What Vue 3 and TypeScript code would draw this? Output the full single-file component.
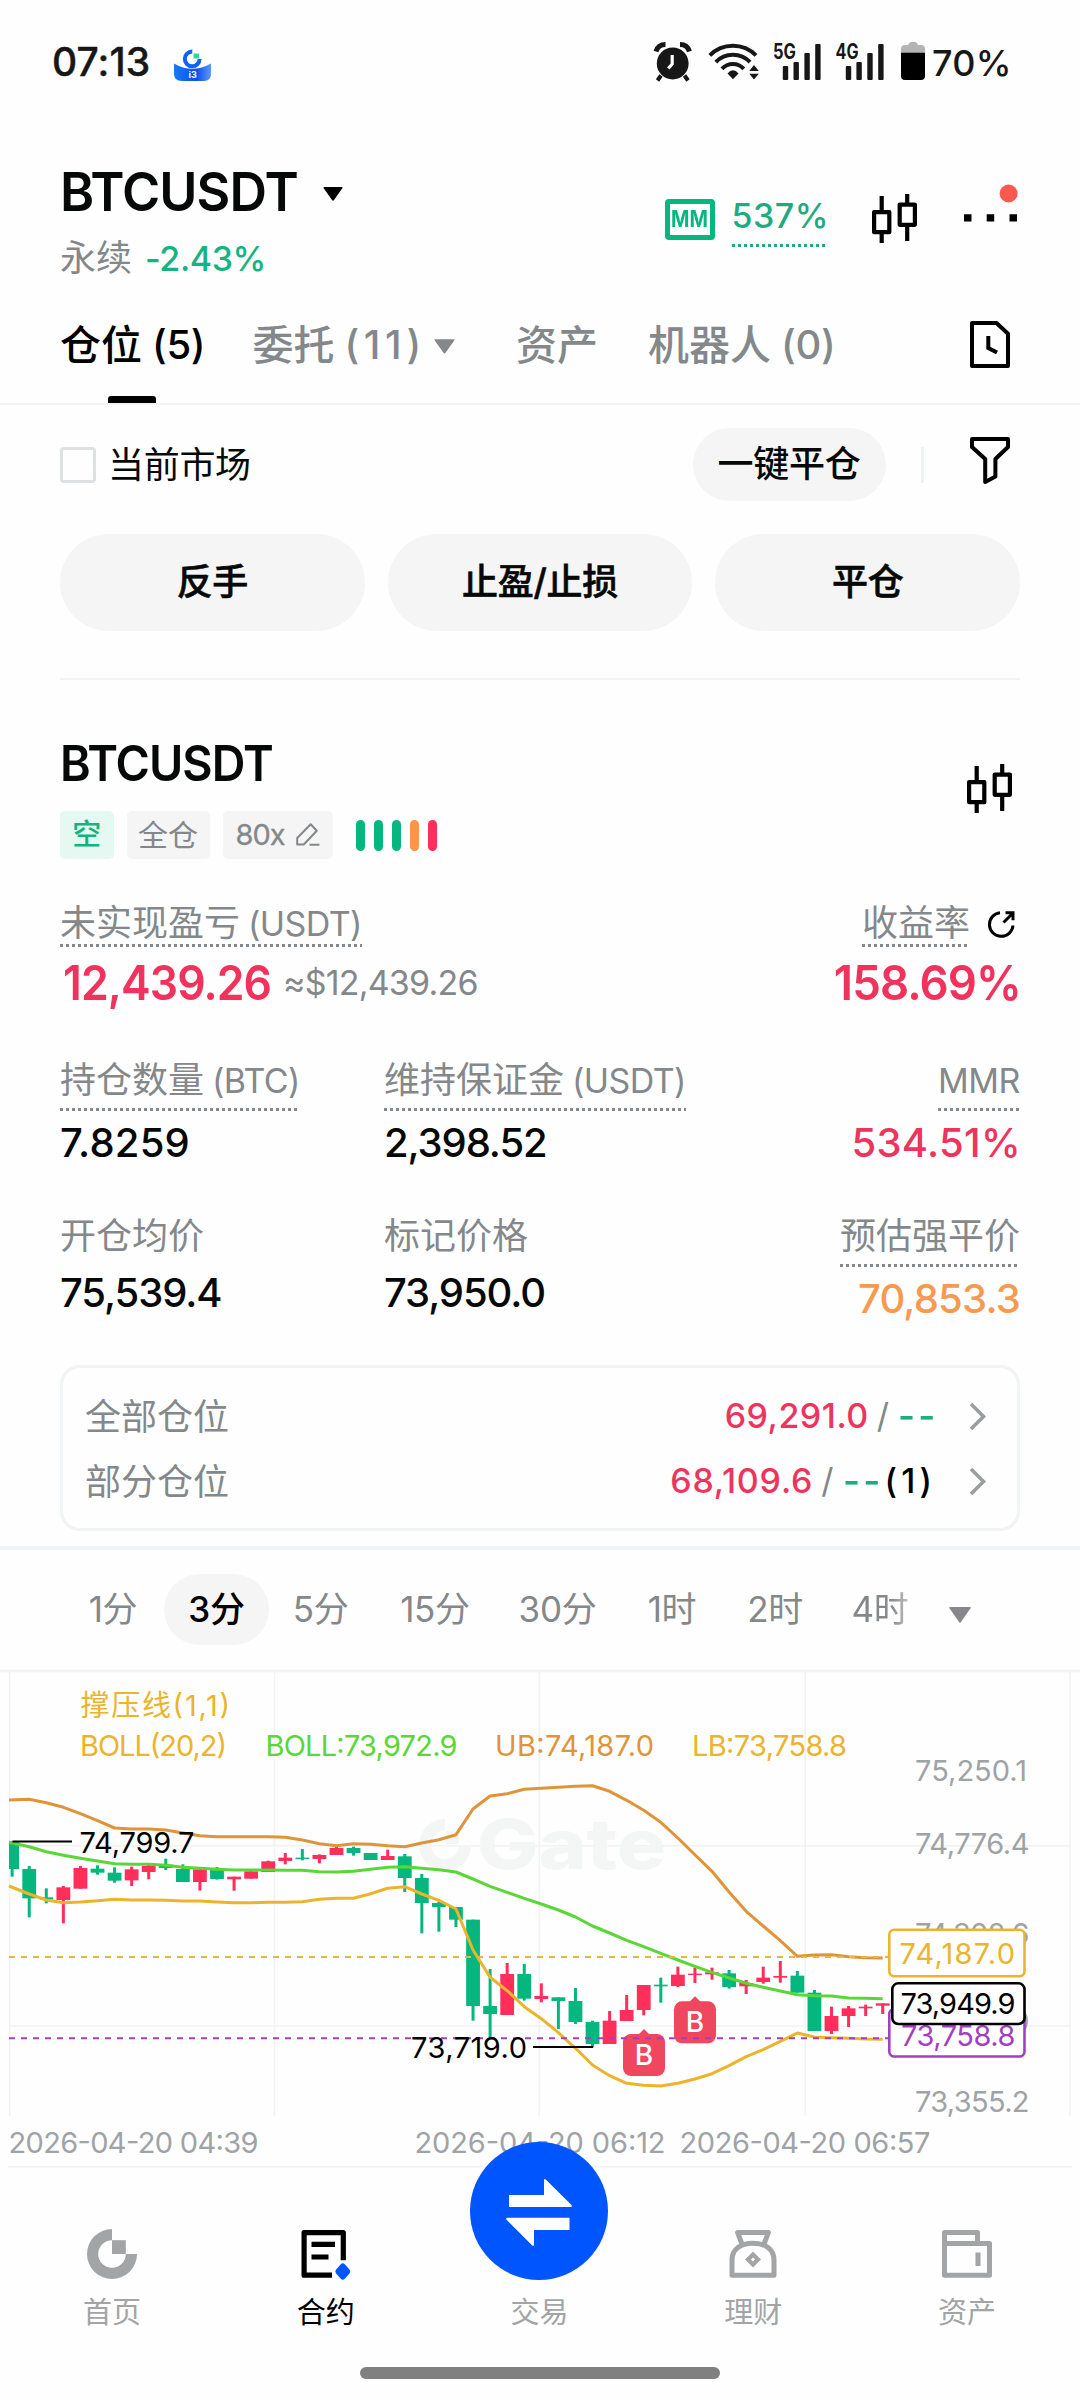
<script setup lang="ts">
interface Frame { label: string; width: number; active?: boolean; fade?: boolean }
type Candle = [up: 0 | 1, high: number, top: number, bottom: number, low: number]

const frames: Frame[] = [
  { label: '1分', width: 102 },
  { label: '3分', width: 105, active: true },
  { label: '5分', width: 103 },
  { label: '15分', width: 126 },
  { label: '30分', width: 119 },
  { label: '1时', width: 110 },
  { label: '2时', width: 96 },
  { label: '4时', width: 114, fade: true },
]

const risk = ['#05b77e', '#05b77e', '#05b77e', '#ff9548', '#ff2e5b']

// Heights are in thirds of a pixel, measured down from the top of the chart.
const candles: Candle[] = [
  [0, 514, 514, 597, 620], [0, 588, 597, 685, 742], [0, 655, 682, 688, 700], [1, 648, 652, 690, 760],
  [1, 588, 594, 656, 656], [0, 586, 596, 608, 614], [0, 592, 608, 632, 638], [1, 590, 598, 631, 648],
  [1, 582, 588, 606, 628], [0, 566, 584, 594, 600], [0, 583, 597, 636, 636], [1, 598, 598, 636, 662],
  [0, 591, 600, 627, 629], [1, 620, 620, 628, 662], [1, 604, 604, 626, 626], [1, 572, 574, 606, 606],
  [1, 549, 563, 573, 583], [0, 537, 563, 567, 571], [1, 553, 555, 567, 580], [1, 530, 534, 555, 555],
  [0, 530, 534, 549, 557], [0, 549, 549, 570, 570], [1, 539, 558, 570, 570], [0, 552, 559, 624, 666],
  [0, 612, 624, 699, 790], [0, 695, 699, 711, 785], [0, 711, 711, 749, 771], [0, 749, 749, 1008, 1052],
  [0, 897, 1008, 1032, 1104], [1, 879, 912, 1035, 1035], [0, 882, 912, 986, 992], [1, 940, 978, 987, 997],
  [0, 982, 982, 993, 1077], [0, 954, 993, 1056, 1062], [0, 1052, 1056, 1122, 1132], [1, 1023, 1052, 1122, 1122],
  [1, 975, 1020, 1053, 1053], [1, 945, 945, 1020, 1036], [0, 923, 944, 949, 998], [1, 890, 914, 948, 951],
  [1, 893, 911, 915, 939], [1, 893, 907, 913, 929], [0, 900, 910, 951, 956], [1, 930, 939, 949, 972],
  [1, 890, 923, 936, 941], [1, 873, 918, 923, 938], [0, 903, 917, 968, 968], [0, 960, 968, 1083, 1083],
  [1, 1010, 1038, 1083, 1092], [1, 1008, 1015, 1038, 1071], [1, 1004, 1010, 1015, 1038], [1, 1000, 1000, 1007, 1032],
]
const upper = [390, 388, 398, 412, 431, 452, 474, 477, 477, 480, 489, 497, 500, 500, 500, 500, 502, 510, 521, 527, 521, 523, 527, 530, 519, 509, 494, 417, 378, 371, 358, 355, 352, 349, 347, 364, 391, 421, 457, 504, 554, 604, 666, 724, 768, 812, 859, 855, 854, 860, 863, 864]
const middle = [517, 530, 545, 556, 565, 573, 581, 583, 583, 586, 592, 595, 598, 600, 600, 600, 601, 601, 605, 606, 604, 598, 592, 590, 595, 599, 606, 627, 649, 667, 685, 702, 720, 741, 768, 789, 811, 830, 850, 870, 889, 907, 924, 940, 952, 963, 974, 977, 978, 984, 985, 986]
const lower = [648, 672, 690, 698, 696, 692, 688, 690, 690, 691, 693, 693, 696, 698, 698, 697, 697, 695, 688, 685, 685, 671, 655, 650, 672, 691, 717, 840, 922, 962, 1010, 1046, 1088, 1135, 1185, 1217, 1240, 1246, 1248, 1240, 1227, 1211, 1187, 1160, 1139, 1114, 1089, 1101, 1103, 1105, 1107, 1108]

const cx = (i: number): number => 12.15 + 17.07 * i
const line = (values: number[]): string =>
  values.map((v, i) => `${(i === 0 ? 9 : cx(i)).toFixed(1)},${(v / 3).toFixed(1)}`).join(' ')
const tint = (c: Candle): string => (c[0] ? '#ff2e5b' : '#05b77e')
const bodyX = (i: number): number => Math.max(9, cx(i) - 6.9)
const bodyW = (i: number): number => cx(i) + 6.9 - bodyX(i)

const markers = [
  { x: 644, y: 364 },
  { x: 695, y: 331.3 },
]
</script>

<template>
  <div class="screen">
    <header class="status">
      <span class="clock">07:13</span>
      <svg class="app-icon" width="37" height="33" viewBox="0 0 37 33">
        <defs>
          <linearGradient id="bowl" x1="0" x2="1" y1="0" y2="0">
            <stop offset="0" stop-color="#1a7af8" /><stop offset=".6" stop-color="#0b4fe6" /><stop offset="1" stop-color="#5f97ff" />
          </linearGradient>
        </defs>
        <path d="M0 14.5Q18 25 37 14.5V25Q37 32 30 32H8Q0 32 0 25Z" fill="url(#bowl)" />
        <path d="M18.3 2.5A7.4 7.4 0 1 0 25.6 10" fill="none" stroke="#0d63f5" stroke-width="4" />
        <rect x="19.5" y="4.5" width="5.5" height="5" fill="#2fd6a0" />
        <text x="18.7" y="29.3" font-size="9" font-weight="700" fill="#fff" text-anchor="middle">i3</text>
      </svg>
      <svg class="status-icons" width="275" height="44" viewBox="652 40 275 44" fill="#171717">
        <circle cx="672.7" cy="63.5" r="15.9" />
        <path d="M656 51.5Q658 44.5 665.500 44.5M689.400 51.500Q687.500 44.500 680 44.500" fill="none" stroke="#171717" stroke-width="5" />
        <path d="M661 75.500L657.500 80.500M684.500 75.500L688 80.500" stroke="#171717" stroke-width="4" />
        <path d="M672.200 55V64L668.300 68.500" fill="none" stroke="#fff" stroke-width="3.200" />
        <g fill="none" stroke="#171717" stroke-width="4">
          <path d="M709.800 55.300A32.500 32.500 0 0 1 756 55.300" />
          <path d="M715.800 62.200A23.500 23.500 0 0 1 750 62.200" />
          <path d="M722 68.800A14.600 14.600 0 0 1 743.800 68.800" />
        </g>
        <path d="M727.500 73.500Q733 67 738.500 73.500L733 79.300Z" />
        <path d="M749.300 71L754 65L758.800 71ZM749.300 73.700H758.800L754 79.600Z" />
        <text x="773" y="59" font-size="21" font-weight="700" textLength="23" lengthAdjust="spacingAndGlyphs">5G</text>
        <rect x="782.800" y="66" width="5.400" height="14" rx="1" /><rect x="793.500" y="62" width="5.400" height="18" rx="1" />
        <rect x="804.400" y="53" width="5.400" height="27" rx="1" /><rect x="815.200" y="44" width="5.400" height="36" rx="1" />
        <text x="835.500" y="59" font-size="21" font-weight="700" textLength="23" lengthAdjust="spacingAndGlyphs">4G</text>
        <rect x="845.800" y="66" width="5.400" height="14" rx="1" /><rect x="856.400" y="62" width="5.400" height="18" rx="1" />
        <rect x="867.300" y="53" width="5.400" height="27" rx="1" /><rect x="878.200" y="44" width="5.400" height="36" rx="1" />
        <path d="M901 53V49Q901 45 905 45H908Q909 42 911 42H915Q917 42 918 45H921Q925 45 925 49V53Z" fill="#b4b4b4" />
        <path d="M901 52.700H925V76Q925 80 921 80H905Q901 80 901 76Z" fill="#000" />
      </svg>
      <span class="battery">70%</span>
    </header>

    <section class="head">
      <div class="pair">
        <div class="pair-name"><span>BTCUSDT</span>
          <svg width="20" height="14" viewBox="0 0 20 14"><path d="M1 0H19Q20 0 19.300 1.200L11 13Q10 14.300 9 13L.7 1.200Q0 0 1 0Z" /></svg>
        </div>
        <div class="pair-sub"><span>永续</span><b>-2.43%</b></div>
      </div>
      <div class="tools">
        <div class="mm"><span>MM</span></div>
        <div class="mm-rate dotted">537%</div>
        <svg class="candles" width="45" height="50" viewBox="0 0 45 50"><use href="#candle-pair" /></svg>
        <svg class="more" width="53" height="50" viewBox="0 0 53 50">
          <path d="M0 21.300H7.500V28.600H0ZM22.700 21.300H30.200V28.600H22.700ZM45.500 21.300H53V28.600H45.500Z" />
          <circle cx="44.600" cy="0.500" r="9" fill="#f95a4d" />
        </svg>
      </div>
    </section>

    <nav class="tabs">
      <div class="tab t1 on">仓位<span>(5)</span></div>
      <div class="tab t2">委托<span class="wide">(11)</span>
        <svg width="21" height="15" viewBox="0 0 20 14" fill="#84888a"><path d="M1 0H19Q20 0 19.300 1.200L11 13Q10 14.300 9 13L.7 1.200Q0 0 1 0Z" /></svg>
      </div>
      <div class="tab t3">资产</div>
      <div class="tab t4">机器人<span>(0)</span></div>
      <svg class="history" width="40" height="47" viewBox="0 0 40 47" fill="none" stroke="#000" stroke-width="4">
        <path d="M2 2H26.500L38 12.800V45H2Z" stroke-linejoin="round" />
        <path d="M18.300 15V27L27 31.500" />
      </svg>
    </nav>

    <section class="filters">
      <i class="check"></i><span class="check-label">当前市场</span>
      <span class="pill">一键平仓</span><i class="sep"></i>
      <svg width="40" height="47" viewBox="0 0 40 47" fill="none" stroke="#000" stroke-width="4" stroke-linejoin="round">
        <path d="M2 2H38V10L25.400 22V39.500L15.200 45V22L2 10Z" />
      </svg>
    </section>
    <section class="actions"><span>反手</span><span>止盈/止损</span><span>平仓</span></section>

    <section class="card">
      <div class="card-head">
        <div>
          <div class="card-name"><span>BTCUSDT</span></div>
          <div class="chips">
            <span class="chip short">空</span>
            <span class="chip cross">全仓</span>
            <span class="chip lever">80x
              <svg width="24" height="24" viewBox="0 0 24 24" fill="none" stroke="#84888a" stroke-width="2"><path d="M1.200 21.500V15L14.700 1.300L20.800 7.800L7.800 21.500ZM13.500 21.800H23.500" stroke-linejoin="round" /></svg>
            </span>
            <i v-for="(c, i) in risk" :key="i" class="risk" :style="{ background: c }"></i>
          </div>
        </div>
        <svg class="candles" width="45" height="50" viewBox="0 0 45 50">
          <g id="candle-pair" fill="none" stroke="#000" stroke-width="4.200">
            <path d="M2.100 18.100H17.300V38.200H2.100ZM27.700 10.600H42.900V30.800H27.700Z" stroke-linejoin="round" />
            <path d="M9.700 2V17M9.700 39V49M35.200 0V10M35.200 32V47" />
          </g>
        </svg>
      </div>

      <div class="pnl">
        <div>
          <div class="label tight"><span class="dotted">未实现盈亏<em>(USDT)</em></span></div>
          <div class="big"><b>12,439.26</b><span>≈$12,439.26</span></div>
        </div>
        <div class="right">
          <div class="label tight"><span class="dotted">收益率</span>
            <svg width="27" height="27" viewBox="0 0 27 27" fill="none" stroke="#000" stroke-width="3"><path d="M12 1.800A11.800 11.800 0 1 0 25 14.500" /><path d="M15.500 11.500L24.500 2.500M17.500 1.800H25V9.300" /></svg>
          </div>
          <div class="big"><b class="roe">158.69%</b></div>
        </div>
      </div>

      <div class="stats">
        <div><div class="label"><span class="dotted">持仓数量<em>(BTC)</em></span></div><div class="value v1">7.8259</div></div>
        <div><div class="label"><span class="dotted">维持保证金<em>(USDT)</em></span></div><div class="value">2,398.52</div></div>
        <div class="right"><div class="label"><span class="dotted"><em class="solo">MMR</em></span></div><div class="value red">534.51%</div></div>
      </div>
      <div class="stats last">
        <div><div class="label"><span>开仓均价</span></div><div class="value">75,539.4</div></div>
        <div><div class="label"><span>标记价格</span></div><div class="value">73,950.0</div></div>
        <div class="right"><div class="label"><span class="dotted">预估强平价</span></div><div class="value orange">70,853.3</div></div>
      </div>

      <div class="orders">
        <div class="order"><span>全部仓位</span><b class="red">69,291.0</b><i>/</i><b class="dash">--</b>
          <svg width="17" height="29" viewBox="0 0 17 29"><path d="M2 2L14.500 14.500L2 27" fill="none" stroke="#9b9d9f" stroke-width="3.600" /></svg>
        </div>
        <div class="order"><span>部分仓位</span><b class="red loose">68,109.6</b><i>/</i><b class="dash">--</b><b class="count">(1)</b>
          <svg width="17" height="29" viewBox="0 0 17 29"><path d="M2 2L14.500 14.500L2 27" fill="none" stroke="#9b9d9f" stroke-width="3.600" /></svg>
        </div>
      </div>
    </section>

    <section class="frames">
      <span v-for="f in frames" :key="f.label" class="frame" :class="{ active: f.active, fade: f.fade }" :style="{ width: f.width + 'px' }">{{ f.label }}</span>
      <svg width="22" height="16" viewBox="0 0 22 16" fill="#84888a"><path d="M1 0H21Q22.300 0 21.500 1.200L12 15Q11 16.300 10 15L.5 1.200Q-.3 0 1 0Z" /></svg>
    </section>

    <svg class="chart" width="1080" height="498" viewBox="0 0 1080 498">
      <g stroke="#f1f2f3" stroke-width="1.500">
        <path d="M0 1H1080" stroke-width="2.500" />
        <path d="M9.600 2V446M274.500 2V446M539.300 2V446M805.200 2V446M1070 2V446M9 175.700H1070M9 356H1070" />
        <path d="M8 496.700H1072" />
      </g>
      <g fill="#f4f5f5">
        <g transform="translate(419 149)"><path d="M26 0A26 26 0 1 0 52 26H40A14 14 0 1 1 26 12Z" /><rect x="27" y="12" width="13" height="13" /></g>
        <text x="477" y="199" font-size="69" font-weight="800" textLength="189" lengthAdjust="spacingAndGlyphs">Gate</text>
      </g>

      <g class="axis" fill="#a0a3a5">
        <text x="915" y="111" textLength="112">75,250.1</text>
        <text x="915" y="184.300" textLength="114.500">74,776.4</text>
        <text x="915" y="274" textLength="114.500">74,302.6</text>
        <text x="915" y="362" textLength="114.500">73,828.9</text>
        <text x="915" y="442" textLength="114.500">73,355.2</text>
        <text x="8.500" y="483" textLength="250">2026-04-20 04:39</text>
        <text x="414.500" y="483" textLength="251">2026-04-20 06:12</text>
        <text x="679.500" y="483" textLength="251">2026-04-20 06:57</text>
      </g>

      <g>
        <g v-for="(c, i) in candles" :key="i" :fill="tint(c)">
          <rect :x="cx(i) - 1.500" :y="c[1] / 3" width="3" :height="(c[4] - c[1]) / 3" />
          <rect :x="bodyX(i)" :y="c[2] / 3" :width="bodyW(i)" :height="(c[3] - c[2]) / 3" />
        </g>
      </g>

      <g fill="#f0465e">
        <g v-for="m in markers" :key="m.x">
          <rect :x="m.x - 21" :y="m.y" width="42" height="42" rx="8" />
          <path :d="`M${m.x - 6} ${m.y + 1}L${m.x} ${m.y - 5}L${m.x + 6} ${m.y + 1}Z`" />
          <text :x="m.x" :y="m.y + 31" font-size="28" font-weight="500" fill="#fff" text-anchor="middle">B</text>
        </g>
      </g>

      <g fill="none" stroke-width="3" stroke-linejoin="round">
        <polyline :points="line(upper)" stroke="#e0943a" />
        <polyline :points="line(middle)" stroke="#5ad637" />
        <polyline :points="line(lower)" stroke="#ebb42b" />
      </g>
      <path d="M9 287H888" stroke="#e5b73b" stroke-width="2" stroke-dasharray="6 6" />
      <path d="M9 368.300H888" stroke="#a33fc0" stroke-width="2" stroke-dasharray="6 6" />

      <g class="axis" fill="#000">
        <path d="M12.500 171.500H72M533 377H593" stroke="#000" stroke-width="2" />
        <text x="79.500" y="183.300" textLength="115">74,799.7</text>
        <text x="411" y="388" textLength="116">73,719.0</text>
      </g>

      <g class="axis">
        <text x="80.500" y="45.500" fill="#ebb42b" textLength="149.500">撑压线(1,1)</text>
        <text x="80" y="86" fill="#ebb42b" textLength="147">BOLL(20,2)</text>
        <text x="265.500" y="86" fill="#5ad637" textLength="192">BOLL:73,972.9</text>
        <text x="495" y="86" fill="#e0943a" textLength="159">UB:74,187.0</text>
        <text x="692" y="86" fill="#ebb42b" textLength="155">LB:73,758.8</text>
      </g>

      <g class="axis tag" fill="#fff" stroke-width="2.600">
        <rect x="889.300" y="339" width="135.200" height="47.500" rx="5" stroke="#a33fc0" />
        <text x="901" y="375.800" fill="#a33fc0" stroke="none" textLength="114.500">73,758.8</text>
        <rect x="889.300" y="259.700" width="135.200" height="46.500" rx="5" stroke="#ebb42b" />
        <text x="899.500" y="294" fill="#ebb42b" stroke="none" textLength="115.500">74,187.0</text>
        <rect x="892.300" y="313.300" width="132.200" height="40.700" rx="6" stroke="#000" />
        <text x="900.500" y="344" fill="#000" stroke="none" textLength="115">73,949.9</text>
      </g>
    </svg>

    <footer class="nav">
      <div class="item">
        <svg width="50" height="50" viewBox="0 0 50 50" fill="#a2a4a6"><path d="M25 0A25 25 0 1 0 50 25H38.800A13.800 13.800 0 1 1 25 11.200Z" /><rect x="25" y="11.200" width="13.800" height="13.800" /></svg>
        <span>首页</span>
      </div>
      <div class="item on">
        <svg width="50" height="50" viewBox="1.500 0 50 50" fill="none" stroke="#000" stroke-width="5.200">
          <path d="M32.500 46.200H4.600V3.600H43.800V31.300" stroke-linejoin="round" /><path d="M12 15.300H35.500M12 28H29" />
          <path d="M43.300 37.500L47.700 42.500L43.300 47.500L38.900 42.500Z" fill="#0055ff" stroke="#0055ff" stroke-width="6" stroke-linejoin="round" />
        </svg>
        <span>合约</span>
      </div>
      <div class="item">
        <div class="trade">
          <svg width="138" height="138" viewBox="0 0 138 138" fill="#fff">
            <path d="M39 53H74V38.500Q74 36 76 37.800L101.500 63Q102.500 65 100.500 65H39Z" />
            <path d="M99.500 75.700V88H64V102.500Q64 105 62 103.200L36.500 77.700Q35.500 75.700 37.500 75.700Z" />
          </svg>
        </div>
        <i class="slot"></i>
        <span>交易</span>
      </div>
      <div class="item">
        <svg width="50" height="50" viewBox="0 0 50 50" fill="none" stroke="#a2a4a6" stroke-width="5" stroke-linejoin="round">
          <path d="M4 46.200H46V31C46 20 37 14.200 25 14.200S4 20 4 31ZM14 15L9.600 3.600H40.400L36 15" />
          <path d="M25 25.500L30 30.500L25 35.500L20 30.500Z" stroke-width="4.200" stroke-linejoin="miter" />
        </svg>
        <span>理财</span>
      </div>
      <div class="item">
        <svg width="50" height="50" viewBox="0 0 50 50" fill="none" stroke="#a2a4a6" stroke-width="5" stroke-linejoin="round">
          <path d="M2.500 14.500H47.500V46.200H2.500ZM2.500 14.500V3.600H35.500V14.500M36 23.500V37" />
        </svg>
        <span>资产</span>
      </div>
    </footer>
    <div class="home-bar"></div>
  </div>
</template>

<style>
body { background: #fefefe; }
</style>

<style scoped>
.screen {
  width: 1080px;
  height: 2400px;
  overflow: hidden;
  position: relative;
  background: #fefefe;
  color: #070808;
  font-family: Inter, "Noto Sans CJK SC", sans-serif;
  white-space: nowrap;
}
.screen, .screen * { box-sizing: border-box; }
svg { display: block; flex: none; overflow: visible; }
i, em { font-style: normal; }

.status { height: 124px; display: flex; align-items: center; padding-left: 52px; color: #171717; }
.clock { font-size: 39px; font-weight: 500; width: 122px; letter-spacing: .1px; margin-top: -1px; -webkit-text-stroke: .4px #171717; }
.app-icon { margin-top: 6px; }
.status-icons { margin-left: 441px; }
.battery { font-size: 36px; font-weight: 500; letter-spacing: .3px; margin: 2px 0 0 5px; }

.head { height: 166px; display: flex; justify-content: space-between; padding: 33px 63.500px 0 60px; }
.pair-name { height: 68px; line-height: 69px; display: flex; align-items: center; font-size: 54px; font-weight: 600; letter-spacing: -1px; gap: 16px; }
.pair-name span { transform: scaleX(.962); transform-origin: left center; }
.pair-name svg { margin-top: 5px; }
.pair-sub { display: flex; gap: 13px; font-size: 36px; line-height: 45px; margin-top: 11px; color: #84888a; }
.pair-sub b { font-size: 34px; font-weight: 500; letter-spacing: -.4px; color: #14b481; }
.tools { display: flex; align-items: flex-start; }
.mm { margin-top: 42px; width: 50px; height: 41px; border: 5px solid #05b77e; border-radius: 4px; color: #05b77e; font-size: 23px; font-weight: 700; line-height: 31px; display: flex; justify-content: center; }
.mm span { transform: scaleX(.86); }
.mm-rate { margin: 38px 46px 0 17px; height: 52px; line-height: 42px; font-size: 34px; font-weight: 500; letter-spacing: .5px; color: #1fab80; width: 94px; }
.head .candles { margin: 37px 47px 0 0; }
.more { margin-top: 36px; }

.dotted { background: repeating-linear-gradient(90deg, currentColor 0 3px, transparent 3px 6px) left bottom / 100% 3px no-repeat; }

.tabs { height: 115px; position: relative; display: flex; padding-left: 60px; border-bottom: 2px solid #f2f3f4; font-size: 41px; line-height: 110px; color: #84888a; }
.tabs .tab { display: flex; align-items: center; position: relative; height: 113px; padding-bottom: 3px; font-weight: 500; }
.tab span { font-size: 40px; margin-left: 10px; letter-spacing: -.3px; }
.tab span.wide { letter-spacing: 4.600px; }
.tab.on { color: #000; }
.tab.on::after { content: ""; position: absolute; left: 48px; bottom: 0; width: 48px; height: 7px; background: #000; border-radius: 3px 3px 0 0; }
.t1 { width: 192.500px; }
.t2 { width: 263.500px; }
.t2 svg { margin-left: 8px; margin-top: 3px; }
.t3 { width: 132px; }
.history { margin: 31px 0 0 auto; position: relative; right: 70px; }

.filters { margin-top: 23px; height: 73px; padding: 0 70px 0 60px; display: flex; align-items: center; font-size: 36px; line-height: 72px; }
.check { width: 36px; height: 36px; border: 3px solid #dfe0e1; border-radius: 4px; margin-right: 12px; }
.check-label { letter-spacing: -.3px; }
.pill { margin-left: auto; width: 193px; height: 73px; line-height: 73px; border-radius: 37px; background: #f5f5f5; text-align: center; font-weight: 500; letter-spacing: -.2px; }
.sep { width: 3px; height: 36px; background: #f0f1f2; margin: 0 46.500px 0 35px; }
.filters svg { margin-top: -9px; }
.actions { margin: 33px 60px 0; padding-bottom: 47px; border-bottom: 2px solid #f2f3f4; display: grid; grid-template-columns: repeat(3, 1fr); gap: 23px; }
.actions span { height: 97px; line-height: 97px; border-radius: 49px; background: #f5f5f5; text-align: center; font-size: 36px; font-weight: 500; letter-spacing: -.3px; -webkit-text-stroke: .6px #070808; }

.card { height: 866px; padding: 53px 60px 0; }
.card-head { height: 126px; display: flex; justify-content: space-between; padding-right: 8px; }
.card-name { height: 60px; line-height: 61px; font-size: 49px; font-weight: 600; letter-spacing: -1px; }
.card-name span { display: inline-block; transform: scaleX(.952); transform-origin: left center; }
.chips { margin-top: 18px; height: 48px; display: flex; align-items: center; }
.card-head .candles { margin-top: 31px; }
.chip { height: 48px; line-height: 48px; border-radius: 5px; background: #f5f5f5; color: #84888a; font-size: 30px; text-align: center; margin-right: 13px; }
.short { width: 53.500px; background: #e5f8f2; color: #14b481; font-size: 29px; font-weight: 500; }
.cross { width: 83px; }
.lever { width: 110px; font-size: 29px; letter-spacing: -1px; display: flex; align-items: center; justify-content: center; gap: 11px; margin-right: 23.500px; -webkit-text-stroke: .3px #84888a; }
.risk { width: 9px; height: 31px; border-radius: 5px; margin-right: 9px; }

.label { font-size: 36px; color: #84888a; height: 60px; display: flex; align-items: flex-start; }
.label span { height: 58px; line-height: 54px; }
.label em { font-size: 34px; letter-spacing: -.6px; margin-left: 8px; }
.label .solo { margin-left: 0; letter-spacing: -.4px; }
.label.tight { height: 47px; }
.label.tight span { height: 47px; line-height: 47px; }
.label svg { margin: 11px 5px 0 18px; }
.right .label { justify-content: flex-end; }
.right { text-align: right; }
.pnl { margin-top: 41px; display: flex; justify-content: space-between; height: 153px; }
.big { height: 60px; line-height: 61px; margin-top: 5px; display: flex; align-items: center; }
.big b { font-size: 48px; font-weight: 600; letter-spacing: -1px; color: #f0325c; margin-left: 3px; width: 211px; transform: scaleX(.928); transform-origin: left center; }
.big span { font-size: 34px; letter-spacing: -.8px; color: #84888a; margin-left: 9px; }
.right .big { justify-content: flex-end; }
.big .roe { width: auto; transform: scaleX(.95); transform-origin: right center; margin-right: -1px; }
.stats { display: grid; grid-template-columns: 324px 1fr auto; height: 156px; }
.value { font-size: 40px; font-weight: 500; line-height: 56px; letter-spacing: -1.100px; margin-top: 2px; }
.v1 { letter-spacing: .2px; }
.last .value { margin-top: -4px; }
.red { color: #ee345d; }
.value.red { letter-spacing: .3px; margin-right: -1px; }
.last .value.orange { color: #f59a50; margin-top: 2px; letter-spacing: -.8px; }

.orders { margin-top: 0; height: 166px; border: 3px solid #f1f3f4; border-radius: 20px; padding: 14px 31px 0 22px; }
.order { height: 65px; display: flex; align-items: center; font-size: 36px; color: #84888a; }
.order span { margin: -2px auto 0 0; }
.order b { font-size: 34px; font-weight: 500; letter-spacing: .5px; margin-top: 1px; }
.order .loose { letter-spacing: .8px; }
.order i { font-size: 34px; margin: 1px 9px 0 8px; }
.order .dash { color: #1fab80; letter-spacing: 3px; width: 36px; text-align: left; font-weight: 600; transform: scaleX(1.080); transform-origin: left center; }
.order .count { color: #000; letter-spacing: 4px; margin-left: 6px; margin-right: -2px; }
.order svg { margin-left: 35px; margin-top: 3px; }

.frames { height: 124px; border-top: 4px solid #f1f3f4; padding: 24px 0 0 62px; display: flex; align-items: flex-start; font-size: 35px; color: #84888a; }
.frame { height: 71px; line-height: 71px; text-align: center; letter-spacing: -.3px; }
.frame.active { background: #f5f5f5; border-radius: 36px; color: #000; font-weight: 500; }
.frame.fade { -webkit-mask-image: linear-gradient(90deg, #000 60%, rgba(0, 0, 0, .4) 78%); mask-image: linear-gradient(90deg, #000 60%, rgba(0, 0, 0, .4) 78%); }
.frames svg { margin: 33px 0 0 12px; }

.axis text { font-size: 29px; }
.nav { height: 199px; padding: 61px 6px 0 5px; display: flex; }
.item { flex: 1; position: relative; display: flex; flex-direction: column; align-items: center; color: #a2a4a6; font-size: 29px; line-height: 37px; }
.item span { margin-top: 15px; }
.item.on { color: #000; }
.slot { height: 50px; }
.trade { position: absolute; top: -87px; width: 138px; height: 138px; border-radius: 50%; background: #0055ff; }
.home-bar { width: 360px; height: 12px; border-radius: 6px; background: #808080; margin: 0 auto; }
</style>
